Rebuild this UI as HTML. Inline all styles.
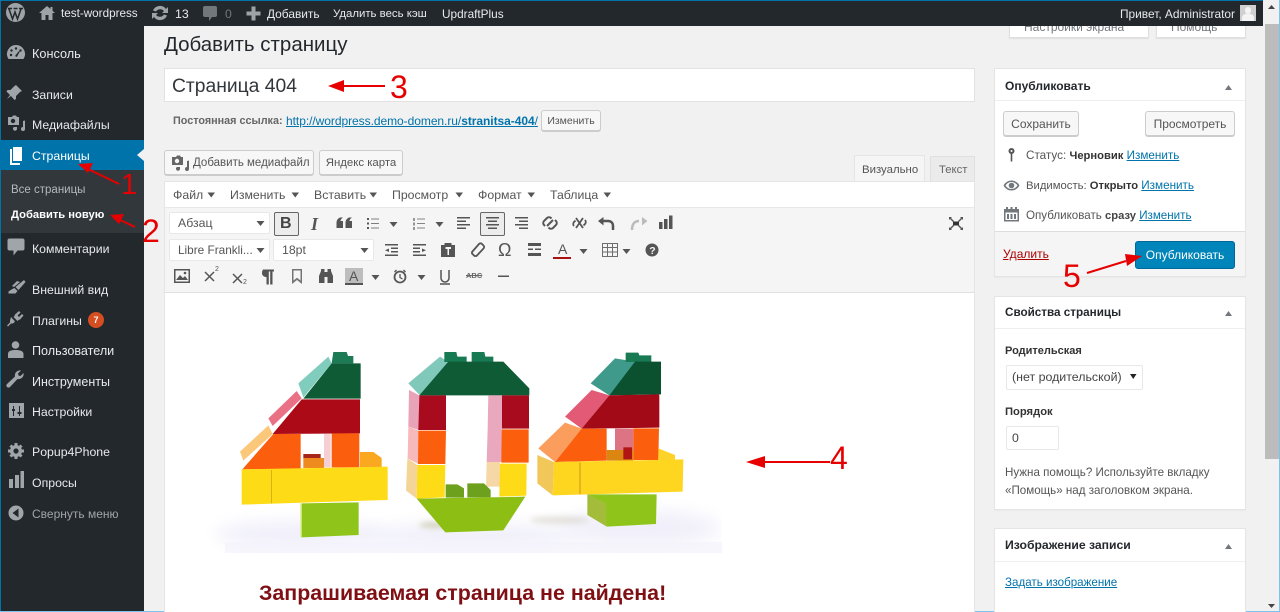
<!DOCTYPE html>
<html><head><meta charset="utf-8"><title>Добавить страницу</title>
<style>
html,body{margin:0;padding:0;width:1280px;height:612px;overflow:hidden;background:#f1f1f1}
body{position:relative;font-family:"Liberation Sans","DejaVu Sans",sans-serif;font-size:12.3px;color:#444}
.a{position:absolute}
.t{position:absolute;white-space:nowrap;line-height:16px;height:16px;margin-top:1px}
.s{color:#e8eaeb}
.g{color:#72777c}
.b{font-weight:bold}
.l{color:#0073aa;text-decoration:underline}
.box{position:absolute;background:#fff;border:1px solid #e5e5e5;box-sizing:border-box;box-shadow:0 1px 1px rgba(0,0,0,.04)}
.btn{position:absolute;box-sizing:border-box;background:#f7f7f7;border:1px solid #ccc;border-radius:3px;box-shadow:0 1px 0 #ccc;text-align:center;color:#555;white-space:nowrap}
.sel{position:absolute;box-sizing:border-box;background:#fff;border:1px solid #e8e8e8;border-radius:2px}
.h{font-weight:bold;color:#23282d;font-size:12px}
svg{position:absolute;left:0;top:0}
</style></head><body>

<!-- screen options -->
<div class="a" style="left:1009px;top:10px;width:140px;height:28px;background:#fff;border:1px solid #e0e0e0;box-sizing:border-box;box-shadow:0 1px 1px rgba(0,0,0,.08)"></div>
<div class="a" style="left:1156px;top:10px;width:90px;height:28px;background:#fff;border:1px solid #e0e0e0;box-sizing:border-box;box-shadow:0 1px 1px rgba(0,0,0,.08)"></div>
<div class="t g" style="left:1024px;top:18px;font-size:12px">Настройки экрана</div>
<div class="t g" style="left:1171px;top:18px;font-size:12px">Помощь</div>

<!-- admin bar -->
<div class="a" style="left:0;top:0;width:1263px;height:26px;background:#23282d"></div>
<div class="a" style="left:0;top:0;width:1280px;height:1px;background:#0073aa"></div>
<!-- sidebar -->
<div class="a" style="left:0;top:26px;width:144px;height:586px;background:#23282d"></div>
<div class="a" style="left:1px;top:140px;width:143px;height:30px;background:#0073aa"></div>
<div class="a" style="left:1px;top:170px;width:143px;height:63px;background:#32373c"></div>
<div class="a" style="left:0;top:0;width:1px;height:612px;background:#0073aa"></div>
<!-- scrollbar -->
<div class="a" style="left:1263px;top:0;width:17px;height:612px;background:#f1f1f1"></div>
<div class="a" style="left:1265px;top:24px;width:14px;height:435px;background:#bcbcbc"></div>
<div class="a" style="left:1279px;top:0;width:1px;height:612px;background:#7cc4ee"></div>
<div class="a" style="left:0;top:611px;width:1280px;height:1px;background:#7cc4ee"></div>

<div class="t s" style="left:61px;top:5px;font-size:11.7px">test-wordpress</div>
<div class="t s" style="left:175px;top:5px">13</div>
<div class="t g" style="left:225px;top:5px">0</div>
<div class="t s" style="left:267px;top:5px;font-size:11.9px">Добавить</div>
<div class="t s" style="left:333px;top:5px;font-size:11.4px">Удалить весь кэш</div>
<div class="t s" style="left:442px;top:5px;font-size:11.8px">UpdraftPlus</div>
<div class="t s" style="left:1120px;top:5px;font-size:11.9px">Привет, Administrator</div>
<div class="a" style="left:1240px;top:5px;width:16px;height:16px;background:#d0d0d0;overflow:hidden"><div class="a" style="left:5px;top:2px;width:6px;height:7px;border-radius:3px;background:#f4f4f4"></div><div class="a" style="left:2px;top:9px;width:12px;height:8px;border-radius:4px 4px 0 0;background:#f4f4f4"></div></div>

<!-- sidebar labels -->
<div class="t s" style="left:32px;top:45px;font-size:12.7px">Консоль</div>
<div class="t s" style="left:32px;top:86px">Записи</div>
<div class="t s" style="left:32px;top:116px">Медиафайлы</div>
<div class="t" style="left:32px;top:147px;color:#fff">Страницы</div>
<div class="t" style="left:11px;top:181px;color:#b4b9be;font-size:11.5px">Все страницы</div>
<div class="t b" style="left:11px;top:206px;color:#fff;font-size:11.2px">Добавить новую</div>
<div class="t s" style="left:32px;top:240px">Комментарии</div>
<div class="t s" style="left:32px;top:281px">Внешний вид</div>
<div class="t s" style="left:32px;top:312px">Плагины</div>
<div class="a" style="left:88px;top:312px;width:16px;height:16px;border-radius:8px;background:#d54e21;color:#fff;font-size:9px;font-weight:bold;text-align:center;line-height:16px">7</div>
<div class="t s" style="left:32px;top:342px;font-size:12.6px">Пользователи</div>
<div class="t s" style="left:32px;top:373px;font-size:12.5px">Инструменты</div>
<div class="t s" style="left:32px;top:403px">Настройки</div>
<div class="t s" style="left:32px;top:443px">Popup4Phone</div>
<div class="t s" style="left:32px;top:474px">Опросы</div>
<div class="t" style="left:32px;top:505px;color:#a0a5aa;font-size:12px">Свернуть меню</div>

<!-- title -->
<div class="t" style="left:164px;top:31px;font-size:20.5px;line-height:26px;height:26px;color:#23282d">Добавить страницу</div>
<div class="a" style="left:164px;top:68px;width:811px;height:34px;background:#fff;border:1px solid #e2e2e2;box-sizing:border-box"></div>
<div class="t" style="left:172px;top:74px;font-size:19.3px;line-height:24px;height:24px;color:#32373c">Страница 404</div>
<div class="t b g" style="left:173px;top:112px;font-size:10.8px;color:#666">Постоянная ссылка:</div>
<div class="t l" style="left:286px;top:112px;font-size:12px;letter-spacing:-.05px">http://wordpress.demo-domen.ru/<b>stranitsa-404</b>/</div>
<div class="btn" style="left:541px;top:110px;width:60px;height:21px;font-size:10.5px;line-height:21px">Изменить</div>

<!-- media buttons -->
<div class="btn" style="left:164px;top:150px;width:150px;height:25px;line-height:25px;text-align:left;padding-left:28px;font-size:11.5px">Добавить медиафайл</div>
<div class="btn" style="left:319px;top:150px;width:84px;height:25px;line-height:25px;font-size:11.4px">Яндекс карта</div>
<div class="a" style="left:854px;top:155px;width:71px;height:27px;background:#f5f5f5;border:1px solid #e5e5e5;border-bottom:0;box-sizing:border-box"></div>
<div class="a" style="left:930px;top:156px;width:45px;height:25px;background:#ebebeb;border:1px solid #e0e0e0;border-bottom:0;box-sizing:border-box"></div>
<div class="t" style="left:862px;top:161px;color:#555;font-size:11.4px">Визуально</div>
<div class="t" style="left:939px;top:161px;color:#666;font-size:11.3px">Текст</div>

<!-- editor -->
<div class="a" style="left:164px;top:181px;width:811px;height:431px;background:#fff;border:1px solid #e5e5e5;box-sizing:border-box;border-bottom:0"></div>
<div class="a" style="left:165px;top:207px;width:809px;height:86px;background:#f5f5f5;border-top:1px solid #e8e8e8;border-bottom:1px solid #e0e0e0;box-sizing:border-box"></div>

<div class="t" style="left:173px;top:186px;color:#555">Файл</div>
<div class="t" style="left:230px;top:186px;color:#555">Изменить</div>
<div class="t" style="left:314px;top:186px;color:#555">Вставить</div>
<div class="t" style="left:392px;top:186px;color:#555">Просмотр</div>
<div class="t" style="left:478px;top:186px;color:#555">Формат</div>
<div class="t" style="left:550px;top:186px;color:#555">Таблица</div>

<div class="sel" style="left:169px;top:212px;width:101px;height:22px"></div>
<div class="sel" style="left:169px;top:239px;width:101px;height:22px"></div>
<div class="sel" style="left:273px;top:239px;width:101px;height:22px"></div>
<div class="t" style="left:178px;top:214px;color:#555">Абзац</div>
<div class="t" style="left:178px;top:241px;color:#555;font-size:11.8px">Libre Frankli...</div>
<div class="t" style="left:282px;top:241px;color:#555">18pt</div>
<div class="a" style="left:274px;top:212px;width:25px;height:24px;background:#ececec;border:1px solid #666;border-radius:2px;box-sizing:border-box"></div>
<div class="a" style="left:480px;top:212px;width:25px;height:24px;background:#ececec;border:1px solid #666;border-radius:2px;box-sizing:border-box"></div>
<div class="a" style="left:345px;top:268px;width:18px;height:17px;background:#bdbdbd"></div>

<div class="t b" style="left:280px;top:214px;font-size:16px;line-height:18px;height:18px;color:#444">B</div>
<div class="t b" style="left:311px;top:214px;font-size:18px;line-height:18px;height:18px;color:#555;font-family:'Liberation Serif',serif;font-style:italic">I</div>
<div class="t" style="left:498px;top:239px;font-size:18px;line-height:20px;height:20px;color:#555">Ω</div>
<div class="t" style="left:558px;top:240px;font-size:14px;line-height:16px;color:#555">A</div>
<div class="t" style="left:349px;top:267px;font-size:14px;line-height:16px;color:#555">A</div>
<div class="t b" style="left:466px;top:270px;font-size:7.5px;line-height:10px;height:10px;color:#666;text-decoration:line-through">ABC</div>
<div class="t" style="left:215px;top:265px;font-size:7px;line-height:8px;height:8px;color:#555">2</div>
<div class="t" style="left:243px;top:278px;font-size:7px;line-height:8px;height:8px;color:#555">2</div>

<!-- Heading -->
<div class="t b" style="left:259px;top:580px;font-size:21.4px;line-height:24px;height:24px;color:#800f14">Запрашиваемая страница не найдена!</div>

<!-- Publish box -->
<div class="box" style="left:994px;top:68px;width:252px;height:209px"></div>
<div class="a" style="left:995px;top:100px;width:250px;height:1px;background:#eee"></div>
<div class="a" style="left:995px;top:231px;width:250px;height:45px;background:#f5f5f5;border-top:1px solid #ddd;box-sizing:border-box"></div>
<div class="t h" style="left:1005px;top:77px">Опубликовать</div>
<div class="btn" style="left:1003px;top:111px;width:76px;height:25px;line-height:25px;font-size:12px">Сохранить</div>
<div class="btn" style="left:1145px;top:111px;width:90px;height:25px;line-height:25px;font-size:12px">Просмотреть</div>
<div class="t" style="left:1026px;top:147px;color:#555;font-size:11.7px">Статус: <b style="color:#333;font-size:11.2px">Черновик</b> <span class="l">Изменить</span></div>
<div class="t" style="left:1026px;top:177px;color:#555;font-size:11.3px">Видимость: <b style="color:#333;font-size:11.2px">Открыто</b> <span class="l" style="font-size:11.7px">Изменить</span></div>
<div class="t" style="left:1026px;top:207px;color:#555;font-size:11.6px">Опубликовать <b style="color:#444;font-size:11.2px">сразу</b> <span class="l">Изменить</span></div>
<div class="t" style="left:1003px;top:245px;color:#a00;text-decoration:underline;font-size:12px">Удалить</div>
<div class="a" style="left:1135px;top:241px;width:100px;height:28px;background:#0085ba;border:1px solid #006799;border-radius:3px;box-sizing:border-box;color:#fff;text-align:center;line-height:26px;font-size:12px">Опубликовать</div>

<!-- Page props -->
<div class="box" style="left:994px;top:296px;width:252px;height:214px"></div>
<div class="a" style="left:995px;top:328px;width:250px;height:1px;background:#eee"></div>
<div class="t h" style="left:1005px;top:304px;font-size:11.7px">Свойства страницы</div>
<div class="t h" style="left:1005px;top:342px;color:#333;font-size:11px">Родительская</div>
<div class="sel" style="left:1006px;top:365px;width:137px;height:25px"></div>
<div class="t" style="left:1012px;top:368px;color:#444;font-size:12.4px">(нет родительской)</div>
<div class="t h" style="left:1005px;top:403px;color:#333;font-size:11.2px">Порядок</div>
<div class="sel" style="left:1006px;top:426px;width:53px;height:24px"></div>
<div class="t" style="left:1012px;top:429px;color:#444">0</div>
<div class="t" style="left:1005px;top:464px;color:#555;font-size:11.6px">Нужна помощь? Используйте вкладку</div>
<div class="t" style="left:1005px;top:482px;color:#555;font-size:11.6px">«Помощь» над заголовком экрана.</div>

<!-- Featured -->
<div class="box" style="left:994px;top:528px;width:252px;height:90px"></div>
<div class="a" style="left:995px;top:561px;width:250px;height:1px;background:#eee"></div>
<div class="t h" style="left:1005px;top:536px;font-size:12.2px">Изображение записи</div>
<div class="t l" style="left:1005px;top:574px;font-size:11.6px">Задать изображение</div>

<svg width="1280" height="612" viewBox="0 0 1280 612" xmlns="http://www.w3.org/2000/svg">
<defs><filter id="bl" x="-30%" y="-80%" width="160%" height="260%"><feGaussianBlur stdDeviation="8"/></filter>
<filter id="bs" x="-30%" y="-80%" width="160%" height="260%"><feGaussianBlur stdDeviation="3"/></filter>
<clipPath id="imgc"><rect x="205" y="340" width="517" height="213"/></clipPath></defs>

<!-- admin bar icons -->
<g fill="#9ea3a8">
<circle cx="15.5" cy="12.5" r="9.5"/>
<path d="M9 9l3.500 10 2.500-7 2.500 7 3.500-10M8 8.500h4M13.500 8.500h4M19 8.500h4" fill="none" stroke="#23282d" stroke-width="1.500"/>
<path d="M47 6l-8 7h2.500v7h4v-5h3v5h4v-7H55l-2.500-2.200V7h-2v2z"/>
<path d="M153 10.500a7.500 7.500 0 0 1 13-1.500l2-2v6h-6l2-2a5 5 0 0 0-8 .5zM167 15.500a7.500 7.500 0 0 1-13 1.500l-2 2v-6h6l-2 2a5 5 0 0 0 8-.5z"/>
<path d="M205 6h10a2 2 0 0 1 2 2v7a2 2 0 0 1-2 2h-3l-3 4v-4h-4a2 2 0 0 1-2-2V8a2 2 0 0 1 2-2z" fill="#72777c"/>
<path d="M251.500 6.500h4v5h5v4h-5v5h-4v-5h-5v-4h5z"/>
</g>

<!-- sidebar icons -->
<g fill="#a0a5aa">
<path d="M16 45a9 9 0 0 0-7.500 14h15a9 9 0 0 0-7.500-14z"/>
<g fill="#23282d"><circle cx="16" cy="48.500" r="1.200"/><circle cx="11.500" cy="50.500" r="1.200"/><circle cx="20.500" cy="50.500" r="1.200"/><circle cx="11" cy="55" r="1.200"/><path d="M15 56l4-5 .8.600-3 5.400z"/></g>
<path d="M16 85l6 6-2 1-4 4 0 3-1.500 1-3.500-4-4 3 3-4-3.500-3.500 1-1.500h3l4-4z"/>
<path d="M8 117h4l1-1.500h3l1 1.500h2v8H8zM20 124h3v-3l2-.5v8.500a2 2 0 1 1-2-2v-3h-3zM14 127h3v1.500a2 2 0 1 1-3-1.500z"/>
<circle cx="13" cy="121" r="2.200" fill="#23282d"/>
<path d="M13 147h9v14h-9z" fill="#fff"/><path d="M10 149h2v14h8v2H10z" fill="#fff"/>
<path d="M10 239h13a2 2 0 0 1 2 2v8a2 2 0 0 1-2 2h-5l-4 5v-5h-4a2 2 0 0 1-2-2v-8a2 2 0 0 1 2-2z" transform="translate(-.5,-.5)"/>
<path d="M24 280l1.500 2-7 8-3-3zM14.500 288l3 3-2 2.500H8.500v-2l3-2z"/>
<path d="M17 281l3 1-6 5-2-1z"/>
<path d="M19 311l1.500 1.500-3 3 1.500 1.500 3-3 1.500 1.500-3.500 4-1.500.5-1 1-4-4 1-1 .5-1.500zM11 317l4 4.500-2 2-2 0-3 3-1-1 3-3v-2z"/>
<circle cx="15.500" cy="345" r="3.800"/><path d="M8 358v-4c0-3 3-4 7.500-4s8 1 8 4v4z"/>
<path d="M23.500 373a5 5 0 0 1-6 6l-7.500 8a2 2 0 0 1-3-3l8-7.500a5 5 0 0 1 6-6l-3 3 .500 2 2 .500z"/>
<path d="M9 403h15v15H9z"/>
<path d="M12 406v3h1v2h-1v5h-1v-5h-1v-2h1v-3z" fill="#23282d" transform="translate(2,0)"/><path d="M19 406h1v6h1.500v2H20v2h-1v-2h-1.500v-2H19z" fill="#23282d"/>
<circle cx="16" cy="451" r="6"/>
<g stroke="#a0a5aa" stroke-width="3"><path d="M16 443v16M8 451h16M10.500 445.500l11 11M21.500 445.500l-11 11"/></g>
<circle cx="16" cy="451" r="2.600" fill="#23282d"/>
<path d="M9 479h4v9H9zM15 475h4v13h-4zM20.500 471h3.500v17h-3.500z" />
<circle cx="16" cy="513" r="7.500"/><path d="M18.500 508.500v9l-6-4.500z" fill="#23282d"/>
</g>
<path d="M144 149l-7 6 7 6z" fill="#f1f1f1"/>

<!-- media button icon -->
<g fill="#666"><path d="M172 157h4l1-1.500h3l1 1.500h2v8h-11zM184 164h3v-3l2-.5v8.500a2 2 0 1 1-2-2v-3h-3zM177 167h3v1.500a2 2 0 1 1-3-1.500z"/><circle cx="177" cy="161" r="2.200" fill="#f7f7f7"/></g>

<!-- menu caret -->
<g fill="#555">
<path d="M207.500 192.500h7.500l-3.750 5zM291.500 192.500h7.500l-3.750 5zM369.500 192.500h7.500l-3.750 5zM455.500 192.500h7.500l-3.750 5zM527.500 192.500h7.500l-3.750 5zM603.500 192.500h7.500l-3.750 5z"/>
<path d="M256.500 221h8l-4 5zM256.500 248h8l-4 5zM360.500 248h8l-4 5zM389.500 222h8l-4 5zM435.500 222h8l-4 5zM579.500 249h8l-4 5zM622.500 249h8l-4 5zM371.500 275h8l-4 5zM417.500 275h8l-4 5z"/>
<path d="M1130 374h6.500l-3.250 5z" fill="#222"/>
</g>

<g fill="#555" stroke="none">
<path d="M340 217.500h3c-1.500 1-2.300 2.300-2.600 3.500h2.600v7h-6.500v-5c0-2.500 1-4.300 3.500-5.500zM349 217.500h3c-1.500 1-2.300 2.300-2.600 3.500h2.600v7h-6.500v-5c0-2.500 1-4.300 3.500-5.500z"/>
<path d="M367 218h2v2h-2zM367 222.500h2v2h-2zM367 227h2v2h-2z"/><path d="M371 218.500h8v1h-8zM371 223h8v1h-8zM371 227.500h8v1h-8z" opacity=".75"/>
<path d="M413 218h2v3h-2zM413 222.500h2v3h-2zM413 227h2v3h-2z" opacity=".6"/><path d="M417 218.500h8v1h-8zM417 223h8v1h-8zM417 227.500h8v1h-8z" opacity=".7"/>
<path d="M457 217h13v1.500h-13zM457 220.500h9v1.500h-9zM457 224h13v1.500h-13zM457 227.500h9v1.500h-9z"/>
<path d="M486 217h13v1.500h-13zM488 220.500h9v1.500h-9zM486 224h13v1.500h-13zM488 227.500h9v1.500h-9z"/>
<path d="M515 217h13v1.500h-13zM519 220.500h9v1.500h-9zM515 224h13v1.500h-13zM519 227.500h9v1.500h-9z"/>
<path d="M659 222h3.500v7H659zM664 219h3.500v10H664zM669 215.500h3.500V229H669z"/>
<path d="M385 244h13v1.500h-13zM391 247.500h7v1.500h-7zM391 251h7v1.500h-7zM385 254.500h13v1.500h-13zM389 248.500v3.500l-4-1.800z"/>
<path d="M413 244h13v1.500h-13zM413 247.500h7v1.500h-7zM413 251h7v1.500h-7zM413 254.500h13v1.500h-13zM422 248.500v3.500l4-1.800z"/>
<path d="M441 245h3.500v-2h7v2h3.500v12h-14z"/><path d="M445.500 247h5.500v2h-2v6h-1.500v-6h-2z" fill="#f5f5f5"/>
<path d="M528 243h13v3h-13zM528 248.500h5v1.500h-5zM535 248.500h6v1.500h-6zM528 253h13v3h-13z"/>
<path d="M602 243h16v14h-16zM603 244v3h4v-3zM608 244v3h4v-3zM613 244v3h4v-3zM603 248v3.500h4V248zM608 248v3.500h4V248zM613 248v3.500h4V248zM603 252.500v3.500h4v-3.500zM608 252.500v3.500h4v-3.500zM613 252.500v3.500h4v-3.500z" fill-rule="evenodd" opacity=".85"/>
<circle cx="652" cy="250" r="6.500"/>
<path d="M174 269h16v14h-16zM175.500 270.500v11h13v-11z" fill-rule="evenodd"/><path d="M176 280l4-5 3 3 2-2 3 4z"/><circle cx="185" cy="273" r="1.300"/>
<path d="M263 269.500h11v2h-1.500v13h-2.300v-13h-1.400v13h-2.300v-7.500c-2.600 0-4.500-1.600-4.500-3.800s1-3.700 1-3.700z"/>
<path d="M292 269h10v15l-5-4-5 4zM293.500 270.500v10l3.500-2.800 3.500 2.800v-10z" fill-rule="evenodd" opacity=".8"/>
<path d="M319 283v-7l2-5v-2h3.500v3h3v-3h3.500v2l2 5v7h-5.500v-6h-3v6z"/>
<path d="M345 283h18v2h-18z"/>
<path d="M498 275.500h11v1.500h-11z"/>
<path d="M953 221.500h6v4h-6z" fill="#333"/>
<path d="M949 217h3l-1 1 3 3-1 1-3-3-1 1zM963 217h-3l1 1-3 3 1 1 3-3 1 1zM949 230h3l-1-1 3-3-1-1-3 3-1-1zM963 230h-3l1-1-3-3 1-1 3 3 1-1z"/>
<circle cx="1011.500" cy="151" r="3"/><path d="M1010.700 153h1.600v8.500h-1.600z"/>
<circle cx="1011.500" cy="151" r="1" fill="#fff"/>
<path d="M1003.500 185.500c2-3.500 5-5 8-5s6 1.500 8 5c-2 3.500-5 5-8 5s-6-1.500-8-5zM1005.500 185.500c1.500 2.200 3.500 3.500 6 3.500s4.500-1.300 6-3.500c-1.500-2.200-3.500-3.500-6-3.500s-4.500 1.300-6 3.500z" fill-rule="evenodd" fill="#72777c"/>
<circle cx="1011.500" cy="185.500" r="2.800" fill="#72777c"/>
<path d="M1004 209h15v12.500h-15zM1005.500 212.500v7.500h12v-7.500z" fill-rule="evenodd" fill="#72777c"/><path d="M1007 214h2v5h-2zM1010.500 214h2v5h-2zM1014 214h2v5h-2zM1006 207h2v3h-2zM1010.500 207h2v3h-2zM1015 207h2v3h-2z" fill="#72777c"/>
<path d="M1225 90l3.500-5 3.500 5zM1225 316l3.500-5 3.500 5zM1225 549l3.500-5 3.500 5z" fill="#72777c"/>
<path d="M1268 9l3.500-4 3.500 4zM1268 604l3.500 4 3.500-4z" fill="#444"/>
</g>
<text x="649.200" y="254" font-family="Liberation Sans" font-size="10.500" font-weight="bold" fill="#f5f5f5">?</text>
<g fill="none" stroke="#555">
<path d="M545 226l-1-1a3 3 0 0 1 0-4l3-3a3 3 0 0 1 4 0l.5 .5M555 220l1 1a3 3 0 0 1 0 4l-3 3a3 3 0 0 1-4 0l-.5-.5M547 226l6-6" stroke-width="2"/>
<path d="M574 226a3 3 0 0 1 0-4l1.500-1.500M585 220a3 3 0 0 1 0 4l-1.500 1.500M576 218l7 10M583 218l-7 10" stroke-width="1.800"/>
<path d="M613 230v-4c0-3-2-5-5-5h-5" stroke-width="2.500"/>
<path d="M632 230c0-5 2-9 7-9" stroke-width="2.500" stroke="#bbb"/>
<path d="M472 252l7-8a2 2 0 0 1 3 0l1.500 1.500a2 2 0 0 1 0 3l-7 7.500h-2l-2.500-2.500z" stroke-width="1.800" fill="#f5f5f5"/>
<circle cx="400" cy="277" r="5.500" stroke-width="1.800"/>
<path d="M400 274v3.500l2.500 1.500M394.500 272l2-2M405.500 272l-2-2" stroke-width="1.300"/>
<path d="M441 270v8a4 4 0 0 0 8 0v-8M440 284h10" stroke-width="1.500"/>
<path d="M205 272l9 9M214 272l-9 9M233 274l9 9M242 274l-9 9" stroke-width="1.500"/>
</g>
<path d="M603.500 217l-5.500 4 5.500 4.500z" fill="#555"/>
<path d="M642 217l5.500 4-5.500 4.500z" fill="#bbb"/>
<path d="M553 257h18v2h-18z" fill="#a11"/>

<!-- LEGO image -->
<g clip-path="url(#imgc)">
<ellipse cx="300" cy="534" rx="85" ry="13" fill="#f0effa" filter="url(#bl)"/>
<ellipse cx="470" cy="536" rx="110" ry="12" fill="#f0effa" filter="url(#bl)"/>
<ellipse cx="640" cy="528" rx="80" ry="18" fill="#f1f0fa" filter="url(#bl)"/>
<rect x="225" y="542" width="497" height="11" fill="#f3f2fb" opacity=".7"/>
<ellipse cx="435" cy="525" rx="16" ry="3" fill="#b8b890" opacity=".6" filter="url(#bs)"/>
<ellipse cx="560" cy="520" rx="30" ry="4" fill="#c9c5b5" opacity=".45" filter="url(#bs)"/>
</g>
<!-- first 4 -->
<g transform="translate(200,340) scale(.33333)">
<path d="M295 130L385 50 395 70 310 172z" fill="#80cdbd"/>
<path d="M400 36h40l4 12h16v22h-65z" fill="#1c7a55"/>
<path d="M310 176L395 70H482V176z" fill="#0f5b36"/>
<path d="M205 235L290 153 305 175 218 258z" fill="#ea7185"/>
<path d="M218 282L305 178H480V280z" fill="#ad0a18"/>
<path d="M120 335L205 256 218 282 130 362z" fill="#fbc77a"/>
<path d="M127 388L220 282H302V386zM395 280H478V382H395z" fill="#fb5f0e"/>
<path d="M372 282h20v100h-20z" fill="#f6cfd5"/>
<path d="M310 342h52v12h-52z" fill="#a8251a"/>
<path d="M310 354h62v30h-62z" fill="#ef8a1e"/>
<path d="M480 336h40l25 18v28h-65z" fill="#f9a81f"/>
<path d="M125 388L563 380V480L125 494z" fill="#fedb17"/>
<path d="M300 490H305V592H300z" fill="#e5f1a2"/>
<path d="M305 490L476 487V585L305 592z" fill="#8fc51b"/>
<path d="M215 390v100" stroke="#c79f10" stroke-width="2"/>
</g>
<!-- zero -->
<g transform="translate(200,340) scale(.33333)">
<path d="M625 130L720 50 745 66 660 166z" fill="#80c8ba"/>
<path d="M733 36h36l3 14h28v16h-67zM815 36h38l3 14h24v16h-65z" fill="#177a52"/>
<path d="M658 166L745 65H910L988 145V166z" fill="#0f5b36"/>
<path d="M627 150L658 166 656 270 625 260z" fill="#e9a3b8"/>
<path d="M625 260L655 272 655 372 623 355z" fill="#f7b9ba"/>
<path d="M622 355L652 375 650 476 618 452z" fill="#f4d597"/>
<path d="M658 166H738V270H655z" fill="#a80b1e"/>
<path d="M655 272H738L736 372H654z" fill="#fb5f0e"/>
<path d="M652 375H736L734 472 650 476z" fill="#fedb17"/>
<path d="M865 166H907V265H863zM863 265H905V366H860z" fill="#e9a8bd"/>
<path d="M860 366H900V440H858z" fill="#f6d8a6"/>
<path d="M906 166H987V266H906z" fill="#a80b1e"/>
<path d="M905 268H986V368H904z" fill="#fb5f0e"/>
<path d="M900 371H980L979 467 898 470z" fill="#fedb17"/>
<path d="M737 433h35l20 12v28h-55zM802 430h50l20 20v22h-70z" fill="#6da01c"/>
<path d="M650 476L976 470 910 571 736 577z" fill="#8dbe14"/>
</g>
<!-- last 4 -->
<g transform="translate(480,340) scale(.33333)">
<path d="M332 130L405 55 472 66 388 166z" fill="#3f9a8c"/>
<path d="M437 38h38l3 8h36v20h-77z" fill="#177a52"/>
<path d="M388 166L465 65H543V163z" fill="#0b5130"/>
<path d="M255 230L335 150 388 166 305 266z" fill="#e25a75"/>
<path d="M305 266L388 166 538 163V263z" fill="#a30a18"/>
<path d="M175 325L255 248 305 266 225 366z" fill="#fb9d5c"/>
<path d="M225 366L305 266H380V362zM460 265H537L535 360H460z" fill="#fb5f0e"/>
<path d="M405 266h55v66h-55z" fill="#dc7483"/>
<path d="M380 330h80v32h-80z" fill="#dc8612"/>
<path d="M430 322h26v36h-26z" fill="#b21614"/>
<path d="M535 325l50 20v15h-50z" fill="#fdd22b"/>
<path d="M172 345L222 366 218 466 172 430z" fill="#f1c75a"/>
<path d="M222 366L610 358 608 455 218 466z" fill="#fed620"/>
<path d="M300 368v95" stroke="#b8790e" stroke-width="2"/>
<path d="M322 463L380 490V560L322 525z" fill="#a3bd3b"/>
<path d="M322 463H530L528 552 380 560 378 490z" fill="#8fc51b"/>
</g>

<!-- red annotations -->
<g stroke="#e60000" stroke-width="2" fill="none">
<path d="M119 184L88 169M135 227L118 219M385 86H342M830 462H762M1087 273L1126 261"/>
</g>
<g fill="#e60000">
<path d="M78 164L93 163 88 173z"/>
<path d="M110 215L124 214 119 224z"/>
<path d="M328 86L344 80V92z"/>
<path d="M746 462L765 456V468z"/>
<path d="M1142 256L1125 254 1127 266z"/>
</g>
<g fill="#e60000" font-family="Liberation Sans" >
<text x="121" y="194" font-size="29">1</text>
<text x="142" y="242" font-size="32">2</text>
<text x="390" y="98" font-size="32">3</text>
<text x="830" y="469" font-size="32">4</text>
<text x="1063" y="287" font-size="32">5</text>
</g>
</svg>
</body></html>
